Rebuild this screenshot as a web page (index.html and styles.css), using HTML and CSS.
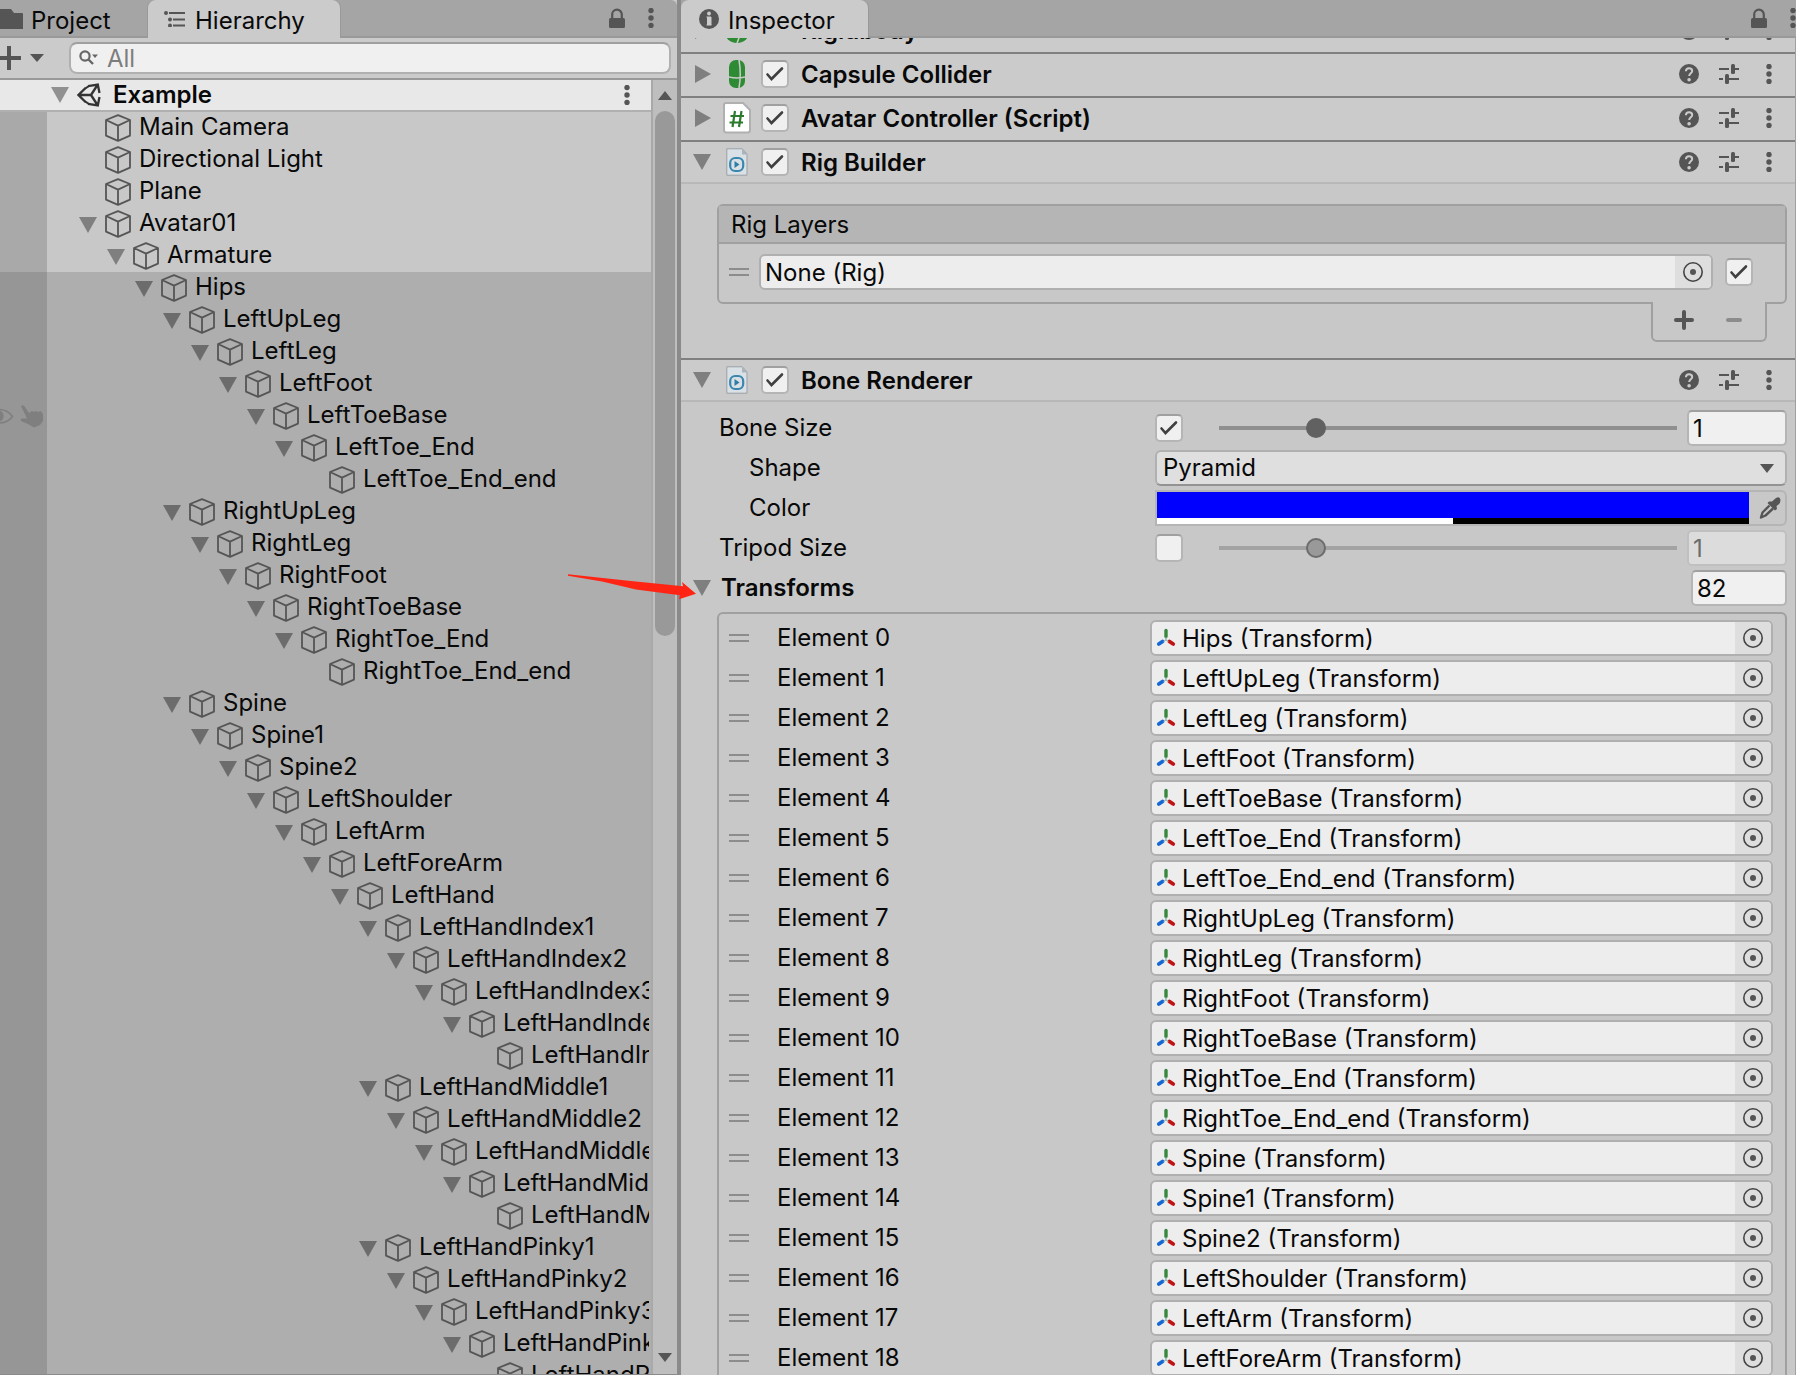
FILE: index.html
```html
<!DOCTYPE html>
<html lang="en">
<head>
<meta charset="utf-8">
<title>Hierarchy and Inspector</title>
<link rel="stylesheet" href="styles.css">
</head>
<body>
<svg class="sprite" aria-hidden="true">
  <symbol id="cube" viewBox="0 0 26 28"><path d="M13 1.200 25 6v15.600L13 26.800 1 21.600V6zM1 6l12 5.600L25 6M13 11.600v15.200" fill="none" stroke="#555" stroke-width="1.800" stroke-linejoin="round"/></symbol>
  <symbol id="down" viewBox="0 0 18 16"><path d="M0 0h18L9 16z"/></symbol>
  <symbol id="right" viewBox="0 0 16 18"><path d="M0 0v18l16-9z"/></symbol>
  <symbol id="dots" viewBox="0 0 6 20"><circle cx="3" cy="2.500" r="2.700"/><circle cx="3" cy="10" r="2.700"/><circle cx="3" cy="17.500" r="2.700"/></symbol>
  <symbol id="lock" viewBox="0 0 16 20"><path d="M3.200 11V6.500a4.800 4.800 0 0 1 9.600 0V11" fill="none" stroke="#555" stroke-width="2.200"/><rect y="10" width="16" height="10" rx="1.500"/></symbol>
  <symbol id="help" viewBox="0 0 20 20"><circle cx="10" cy="10" r="10"/><path d="M6.900 7.200C7 5.100 8.200 4.200 10 4.200c1.900 0 3.200 1 3.200 2.700 0 2.300-3 2.500-3 5.100" fill="none" stroke="#cbcbcb" stroke-width="2"/><circle cx="10.100" cy="15.700" r="1.800" fill="#cbcbcb"/></symbol>
  <symbol id="preset" viewBox="0 0 20 20"><path d="M0 5h10M16 5h4M0 15h4M10 15h10" stroke="#555" stroke-width="2"/><rect x="12" y="0" width="4" height="10" rx="1.500"/><rect x="6" y="10" width="4" height="10" rx="1.500"/></symbol>
  <symbol id="pick" viewBox="0 0 20 20"><circle cx="10" cy="10" r="9.200" fill="none" stroke="#444" stroke-width="1.600"/><circle cx="10" cy="10" r="3"/></symbol>
  <symbol id="axes" viewBox="0 0 20 20"><path d="M10 2.500v6" stroke="#388740" stroke-width="3.400" stroke-linecap="round"/><path d="M9 9h2l-1 2z" fill="#388740"/><path d="M6.500 13.500 2.800 16" stroke="#1569d4" stroke-width="3.800" stroke-linecap="round"/><path d="m13.500 13.500 3.700 2.500" stroke="#c01414" stroke-width="3.800" stroke-linecap="round"/><path d="M10 9v3l-2.500 1.500M10 12l2.500 1.500" fill="none" stroke="#8aa" stroke-width="1"/></symbol>
  <symbol id="asset" viewBox="0 0 22 28"><path d="M.8.800h15.500L21 6v21.200H.8z" fill="#d9e1e7" stroke="#9b9fa3" stroke-width="1"/><path d="M16 1v5.500h5z" fill="#a9b4bd"/><rect x="4.200" y="10" width="13" height="13" rx="5" fill="none" stroke="#3a86ad" stroke-width="2.200"/><path d="M8.500 13v7l5-3.500z" fill="#2f7ca6"/></symbol>
</svg>

<main class="editor">
  <section class="panel hierarchy">
    <div class="tabs" role="tablist">
      <button class="tab tab-project" role="tab"><svg width="24" height="20" viewBox="0 0 24 20"><path d="M0 0h11l3 4h8q1 0 1 1v15H0z"/></svg><span>Project</span></button>
      <button class="tab tab-hierarchy active" role="tab" aria-selected="true"><svg width="22" height="16" viewBox="0 0 22 16"><path d="M5 2h16M9 8.500h12M9 14.500h12" stroke="#555" stroke-width="2"/><circle cx="2" cy="2" r="2"/><circle cx="6" cy="8.500" r="2"/><circle cx="6" cy="14.500" r="2"/></svg><span>Hierarchy</span></button>
      <div class="tab-tools">
        <button class="bare" aria-label="Lock"><svg width="16" height="20"><use href="#lock"/></svg></button>
        <button class="bare" aria-label="Panel menu"><svg width="6" height="20"><use href="#dots"/></svg></button>
      </div>
    </div>
    <div class="toolbar">
      <button class="bare add" aria-label="Create"><svg width="44" height="24" viewBox="0 0 44 24"><path d="M0 12h21M9 0v24" stroke="#555" stroke-width="4"/><path d="M30 8h14l-7 8z"/></svg></button>
      <label class="search"><svg width="20" height="16" viewBox="0 0 20 16"><circle cx="6" cy="6" r="4.600" fill="none" stroke="#666" stroke-width="2.200"/><path d="m9 9 5 5" stroke="#666" stroke-width="2.400"/><path d="M13 4.500h6l-3 3.500z" fill="#666"/></svg><input type="text" placeholder="All" aria-label="Search hierarchy"></label>
    </div>
    <div class="tree-wrap">
      <div class="tree-view">
        <div class="scene"><svg class="fold" width="18" height="16"><use href="#down"/></svg><svg class="logo" width="24" height="24" viewBox="0 0 24 24"><path d="M11 3.200 20.800 1.500 22.500 10M8.500 5 1.500 12l7 7M11 20.800l9.800 1.700 1.700-8.500M1.500 12H14l6.800-10.500M14 12l6.800 10.500" fill="none" stroke="#333" stroke-width="2.300"/><path d="M8 5.600 12 3M8 18.400l4 2.600" fill="none" stroke="#333" stroke-width="2"/></svg><span>Example</span><button class="bare" aria-label="Scene menu"><svg width="6" height="20"><use href="#dots"/></svg></button></div>
        <ul class="tree">
          <li class="leaf"><i></i><svg class="fold"><use href="#down"/></svg><svg class="cube"><use href="#cube"/></svg>Main Camera</li>
          <li class="leaf"><i></i><svg class="fold"><use href="#down"/></svg><svg class="cube"><use href="#cube"/></svg>Directional Light</li>
          <li class="leaf"><i></i><svg class="fold"><use href="#down"/></svg><svg class="cube"><use href="#cube"/></svg>Plane</li>
          <li><i></i><svg class="fold"><use href="#down"/></svg><svg class="cube"><use href="#cube"/></svg>Avatar01</li>
          <li style="--depth:1"><i></i><svg class="fold"><use href="#down"/></svg><svg class="cube"><use href="#cube"/></svg>Armature</li>
          <li class="sel" style="--depth:2"><i></i><svg class="fold"><use href="#down"/></svg><svg class="cube"><use href="#cube"/></svg>Hips</li>
          <li class="sel" style="--depth:3"><i></i><svg class="fold"><use href="#down"/></svg><svg class="cube"><use href="#cube"/></svg>LeftUpLeg</li>
          <li class="sel" style="--depth:4"><i></i><svg class="fold"><use href="#down"/></svg><svg class="cube"><use href="#cube"/></svg>LeftLeg</li>
          <li class="sel" style="--depth:5"><i></i><svg class="fold"><use href="#down"/></svg><svg class="cube"><use href="#cube"/></svg>LeftFoot</li>
          <li class="sel" style="--depth:6"><i><svg width="44" height="24" viewBox="0 0 44 24"><path d="M0 5.500Q8 6 12.500 12.500 8 18.500 0 19" fill="none" stroke="#7f7f7f" stroke-width="1.600"/><path d="M0 6.500a6 6 0 0 1 0 11z" fill="#7f7f7f"/><path d="M21 2q2-2 4 1l4 6 3-2 2 1 2-1 2 1 3-1 1 2 1 1v7l-3 4-6 2.500-5-3-8-3.500q-1-2 1-2.500l5 0z" fill="#7f7f7f"/></svg></i><svg class="fold"><use href="#down"/></svg><svg class="cube"><use href="#cube"/></svg>LeftToeBase</li>
          <li class="sel" style="--depth:7"><i></i><svg class="fold"><use href="#down"/></svg><svg class="cube"><use href="#cube"/></svg>LeftToe_End</li>
          <li class="sel leaf" style="--depth:8"><i></i><svg class="fold"><use href="#down"/></svg><svg class="cube"><use href="#cube"/></svg>LeftToe_End_end</li>
          <li class="sel" style="--depth:3"><i></i><svg class="fold"><use href="#down"/></svg><svg class="cube"><use href="#cube"/></svg>RightUpLeg</li>
          <li class="sel" style="--depth:4"><i></i><svg class="fold"><use href="#down"/></svg><svg class="cube"><use href="#cube"/></svg>RightLeg</li>
          <li class="sel" style="--depth:5"><i></i><svg class="fold"><use href="#down"/></svg><svg class="cube"><use href="#cube"/></svg>RightFoot</li>
          <li class="sel" style="--depth:6"><i></i><svg class="fold"><use href="#down"/></svg><svg class="cube"><use href="#cube"/></svg>RightToeBase</li>
          <li class="sel" style="--depth:7"><i></i><svg class="fold"><use href="#down"/></svg><svg class="cube"><use href="#cube"/></svg>RightToe_End</li>
          <li class="sel leaf" style="--depth:8"><i></i><svg class="fold"><use href="#down"/></svg><svg class="cube"><use href="#cube"/></svg>RightToe_End_end</li>
          <li class="sel" style="--depth:3"><i></i><svg class="fold"><use href="#down"/></svg><svg class="cube"><use href="#cube"/></svg>Spine</li>
          <li class="sel" style="--depth:4"><i></i><svg class="fold"><use href="#down"/></svg><svg class="cube"><use href="#cube"/></svg>Spine1</li>
          <li class="sel" style="--depth:5"><i></i><svg class="fold"><use href="#down"/></svg><svg class="cube"><use href="#cube"/></svg>Spine2</li>
          <li class="sel" style="--depth:6"><i></i><svg class="fold"><use href="#down"/></svg><svg class="cube"><use href="#cube"/></svg>LeftShoulder</li>
          <li class="sel" style="--depth:7"><i></i><svg class="fold"><use href="#down"/></svg><svg class="cube"><use href="#cube"/></svg>LeftArm</li>
          <li class="sel" style="--depth:8"><i></i><svg class="fold"><use href="#down"/></svg><svg class="cube"><use href="#cube"/></svg>LeftForeArm</li>
          <li class="sel" style="--depth:9"><i></i><svg class="fold"><use href="#down"/></svg><svg class="cube"><use href="#cube"/></svg>LeftHand</li>
          <li class="sel" style="--depth:10"><i></i><svg class="fold"><use href="#down"/></svg><svg class="cube"><use href="#cube"/></svg>LeftHandIndex1</li>
          <li class="sel" style="--depth:11"><i></i><svg class="fold"><use href="#down"/></svg><svg class="cube"><use href="#cube"/></svg>LeftHandIndex2</li>
          <li class="sel" style="--depth:12"><i></i><svg class="fold"><use href="#down"/></svg><svg class="cube"><use href="#cube"/></svg>LeftHandIndex3</li>
          <li class="sel" style="--depth:13"><i></i><svg class="fold"><use href="#down"/></svg><svg class="cube"><use href="#cube"/></svg>LeftHandIndex4</li>
          <li class="sel leaf" style="--depth:14"><i></i><svg class="fold"><use href="#down"/></svg><svg class="cube"><use href="#cube"/></svg>LeftHandIndex4_end</li>
          <li class="sel" style="--depth:10"><i></i><svg class="fold"><use href="#down"/></svg><svg class="cube"><use href="#cube"/></svg>LeftHandMiddle1</li>
          <li class="sel" style="--depth:11"><i></i><svg class="fold"><use href="#down"/></svg><svg class="cube"><use href="#cube"/></svg>LeftHandMiddle2</li>
          <li class="sel" style="--depth:12"><i></i><svg class="fold"><use href="#down"/></svg><svg class="cube"><use href="#cube"/></svg>LeftHandMiddle3</li>
          <li class="sel" style="--depth:13"><i></i><svg class="fold"><use href="#down"/></svg><svg class="cube"><use href="#cube"/></svg>LeftHandMiddle4</li>
          <li class="sel leaf" style="--depth:14"><i></i><svg class="fold"><use href="#down"/></svg><svg class="cube"><use href="#cube"/></svg>LeftHandMiddle4_end</li>
          <li class="sel" style="--depth:10"><i></i><svg class="fold"><use href="#down"/></svg><svg class="cube"><use href="#cube"/></svg>LeftHandPinky1</li>
          <li class="sel" style="--depth:11"><i></i><svg class="fold"><use href="#down"/></svg><svg class="cube"><use href="#cube"/></svg>LeftHandPinky2</li>
          <li class="sel" style="--depth:12"><i></i><svg class="fold"><use href="#down"/></svg><svg class="cube"><use href="#cube"/></svg>LeftHandPinky3</li>
          <li class="sel" style="--depth:13"><i></i><svg class="fold"><use href="#down"/></svg><svg class="cube"><use href="#cube"/></svg>LeftHandPinky4</li>
          <li class="sel leaf" style="--depth:14"><i></i><svg class="fold"><use href="#down"/></svg><svg class="cube"><use href="#cube"/></svg>LeftHandPinky4_end</li>
        </ul>
      </div>
      <div class="scrollbar">
        <button class="bare" aria-label="Scroll up"><svg width="14" height="9" viewBox="0 0 14 9"><path d="M0 9h14L7 0z"/></svg></button>
        <div class="track"><div class="thumb"></div></div>
        <button class="bare" aria-label="Scroll down"><svg width="14" height="9" viewBox="0 0 14 9"><path d="M0 0h14L7 9z"/></svg></button>
      </div>
    </div>
  </section>

  <section class="panel inspector">
    <div class="tabs" role="tablist">
      <button class="tab tab-inspector active" role="tab" aria-selected="true"><svg width="20" height="20" viewBox="0 0 20 20"><circle cx="10" cy="10" r="10"/><circle cx="10" cy="4.500" r="1.900" fill="#cbcbcb"/><path d="M7.500 8H12v8M7.500 16h5" stroke="#cbcbcb" stroke-width="1"/><path d="M8 8h4v8H8z" fill="#cbcbcb"/></svg><span>Inspector</span></button>
      <div class="tab-tools">
        <button class="bare" aria-label="Lock"><svg width="16" height="20"><use href="#lock"/></svg></button>
        <button class="bare" aria-label="Panel menu"><svg width="6" height="20"><use href="#dots"/></svg></button>
      </div>
    </div>
    <div class="scroll-area">
      <div class="components">
        <header class="comp">
          <svg class="fold" width="16" height="18"><use href="#right"/></svg>
          <span class="comp-icon"><svg width="28" height="28" viewBox="0 0 28 28"><circle cx="14" cy="14" r="13" fill="#2f8a34"/><path d="M1 14q13 5 26 0M14 1q6 13 0 26" stroke="#cbcbcb" stroke-width="1.500" fill="none"/></svg></span>
          <span class="no-check"></span>
          <h2>Rigidbody</h2>
          <span class="comp-tools"><button class="bare" aria-label="Help"><svg width="20" height="20"><use href="#help"/></svg></button><button class="bare" aria-label="Presets"><svg width="20" height="20"><use href="#preset"/></svg></button><button class="bare" aria-label="Menu"><svg width="6" height="20"><use href="#dots"/></svg></button></span>
        </header>
        <header class="comp">
          <svg class="fold" width="16" height="18"><use href="#right"/></svg>
          <span class="comp-icon"><svg width="16" height="28" viewBox="0 0 16 28"><rect width="16" height="28" rx="7" fill="#2f8a34"/><path d="M0 17q8 2 16 0M10 0q2.500 14 0 28" fill="none" stroke="#cbcbcb" stroke-width="1.500"/></svg></span>
          <input type="checkbox" checked aria-label="Enable Capsule Collider">
          <h2>Capsule Collider</h2>
          <span class="comp-tools"><button class="bare" aria-label="Help"><svg width="20" height="20"><use href="#help"/></svg></button><button class="bare" aria-label="Presets"><svg width="20" height="20"><use href="#preset"/></svg></button><button class="bare" aria-label="Menu"><svg width="6" height="20"><use href="#dots"/></svg></button></span>
        </header>
        <header class="comp">
          <svg class="fold" width="16" height="18"><use href="#right"/></svg>
          <span class="comp-icon"><svg width="28" height="32" viewBox="0 0 28 32"><path d="M3 1h17l7 7v20q0 2.500-2.500 2.500h-21Q1 30.500 1 28V3q0-2 2-2z" fill="#fff" stroke="#b0b0b0" stroke-width="2"/><path d="M12 9 9.500 25M18.500 9 16 25M7.500 14h13.500M6.500 20.500H20" stroke="#2b7a2d" stroke-width="2.200" fill="none"/></svg></span>
          <input type="checkbox" checked aria-label="Enable Avatar Controller">
          <h2>Avatar Controller (Script)</h2>
          <span class="comp-tools"><button class="bare" aria-label="Help"><svg width="20" height="20"><use href="#help"/></svg></button><button class="bare" aria-label="Presets"><svg width="20" height="20"><use href="#preset"/></svg></button><button class="bare" aria-label="Menu"><svg width="6" height="20"><use href="#dots"/></svg></button></span>
        </header>
        <header class="comp open">
          <svg class="fold" width="18" height="16"><use href="#down"/></svg>
          <span class="comp-icon"><svg width="22" height="28"><use href="#asset"/></svg></span>
          <input type="checkbox" checked aria-label="Enable Rig Builder">
          <h2>Rig Builder</h2>
          <span class="comp-tools"><button class="bare" aria-label="Help"><svg width="20" height="20"><use href="#help"/></svg></button><button class="bare" aria-label="Presets"><svg width="20" height="20"><use href="#preset"/></svg></button><button class="bare" aria-label="Menu"><svg width="6" height="20"><use href="#dots"/></svg></button></span>
        </header>
        <div class="rig-body">
          <div class="box">
            <h3>Rig Layers</h3>
            <div class="rig-row"><span class="handle"></span><div class="object"><span>None (Rig)</span><button aria-label="Select rig"><svg width="20" height="20"><use href="#pick"/></svg></button></div><input type="checkbox" checked aria-label="Layer active"></div>
          </div>
          <div class="box-footer">
            <button class="bare" aria-label="Add layer"><svg width="20" height="20" viewBox="0 0 20 20"><path d="M2 10h16M10 2v16" stroke="#555" stroke-width="4" stroke-linecap="round"/></svg></button>
            <button class="bare" aria-label="Remove layer"><svg width="20" height="20" viewBox="0 0 20 20"><path d="M4 10h12" stroke="#8c8c8c" stroke-width="4" stroke-linecap="round"/></svg></button>
          </div>
        </div>
        <header class="comp open">
          <svg class="fold" width="18" height="16"><use href="#down"/></svg>
          <span class="comp-icon"><svg width="22" height="28"><use href="#asset"/></svg></span>
          <input type="checkbox" checked aria-label="Enable Bone Renderer">
          <h2>Bone Renderer</h2>
          <span class="comp-tools"><button class="bare" aria-label="Help"><svg width="20" height="20"><use href="#help"/></svg></button><button class="bare" aria-label="Presets"><svg width="20" height="20"><use href="#preset"/></svg></button><button class="bare" aria-label="Menu"><svg width="6" height="20"><use href="#dots"/></svg></button></span>
        </header>
        <div class="bone-body">
          <div class="prop"><label for="bone-size">Bone Size</label><div class="control"><input type="checkbox" checked aria-label="Draw bones"><input type="range" min="0.01" max="5" step="0.01" value="1" aria-label="Bone size"><input class="number" id="bone-size" type="text" value="1"></div></div>
          <div class="prop sub"><label for="shape">Shape</label><div class="control select"><select id="shape"><option>Pyramid</option></select><svg width="14" height="9" viewBox="0 0 14 9"><path d="M0 0h14L7 9z"/></svg></div></div>
          <div class="prop sub"><label for="color">Color</label><div class="control color"><div class="swatch"><input id="color" type="color" value="#0000ff"><div class="alpha"></div></div><button class="bare" aria-label="Pick color"><svg width="22" height="22" viewBox="0 0 22 22"><path d="m13 4.500 4-3.500q4-2 4.500 2 0 3-2 4.500l-2 1.500.5 3-2 1.500-7.500-7.500L10 4.500z"/><path d="M10.500 8.500 3.500 15.500 2 20.500l4.500-2 7.500-7" fill="none" stroke="#555" stroke-width="2.400" stroke-linejoin="round"/></svg></button></div></div>
          <div class="prop"><label for="tripod-size">Tripod Size</label><div class="control"><input type="checkbox" aria-label="Draw tripods"><input type="range" min="0.01" max="5" step="0.01" value="1" disabled aria-label="Tripod size"><input class="number" id="tripod-size" type="text" value="1" disabled></div></div>
          <div class="prop transforms"><svg class="fold" width="18" height="16"><use href="#down"/></svg><label for="count">Transforms</label><input class="number" id="count" type="text" value="82"></div>
          <div class="box elements">
            <div class="element"><span class="handle"></span><span>Element 0</span><div class="object"><svg width="20" height="20"><use href="#axes"/></svg><span>Hips (Transform)</span><button aria-label="Select"><svg width="20" height="20"><use href="#pick"/></svg></button></div></div>
            <div class="element"><span class="handle"></span><span>Element 1</span><div class="object"><svg width="20" height="20"><use href="#axes"/></svg><span>LeftUpLeg (Transform)</span><button aria-label="Select"><svg width="20" height="20"><use href="#pick"/></svg></button></div></div>
            <div class="element"><span class="handle"></span><span>Element 2</span><div class="object"><svg width="20" height="20"><use href="#axes"/></svg><span>LeftLeg (Transform)</span><button aria-label="Select"><svg width="20" height="20"><use href="#pick"/></svg></button></div></div>
            <div class="element"><span class="handle"></span><span>Element 3</span><div class="object"><svg width="20" height="20"><use href="#axes"/></svg><span>LeftFoot (Transform)</span><button aria-label="Select"><svg width="20" height="20"><use href="#pick"/></svg></button></div></div>
            <div class="element"><span class="handle"></span><span>Element 4</span><div class="object"><svg width="20" height="20"><use href="#axes"/></svg><span>LeftToeBase (Transform)</span><button aria-label="Select"><svg width="20" height="20"><use href="#pick"/></svg></button></div></div>
            <div class="element"><span class="handle"></span><span>Element 5</span><div class="object"><svg width="20" height="20"><use href="#axes"/></svg><span>LeftToe_End (Transform)</span><button aria-label="Select"><svg width="20" height="20"><use href="#pick"/></svg></button></div></div>
            <div class="element"><span class="handle"></span><span>Element 6</span><div class="object"><svg width="20" height="20"><use href="#axes"/></svg><span>LeftToe_End_end (Transform)</span><button aria-label="Select"><svg width="20" height="20"><use href="#pick"/></svg></button></div></div>
            <div class="element"><span class="handle"></span><span>Element 7</span><div class="object"><svg width="20" height="20"><use href="#axes"/></svg><span>RightUpLeg (Transform)</span><button aria-label="Select"><svg width="20" height="20"><use href="#pick"/></svg></button></div></div>
            <div class="element"><span class="handle"></span><span>Element 8</span><div class="object"><svg width="20" height="20"><use href="#axes"/></svg><span>RightLeg (Transform)</span><button aria-label="Select"><svg width="20" height="20"><use href="#pick"/></svg></button></div></div>
            <div class="element"><span class="handle"></span><span>Element 9</span><div class="object"><svg width="20" height="20"><use href="#axes"/></svg><span>RightFoot (Transform)</span><button aria-label="Select"><svg width="20" height="20"><use href="#pick"/></svg></button></div></div>
            <div class="element"><span class="handle"></span><span>Element 10</span><div class="object"><svg width="20" height="20"><use href="#axes"/></svg><span>RightToeBase (Transform)</span><button aria-label="Select"><svg width="20" height="20"><use href="#pick"/></svg></button></div></div>
            <div class="element"><span class="handle"></span><span>Element 11</span><div class="object"><svg width="20" height="20"><use href="#axes"/></svg><span>RightToe_End (Transform)</span><button aria-label="Select"><svg width="20" height="20"><use href="#pick"/></svg></button></div></div>
            <div class="element"><span class="handle"></span><span>Element 12</span><div class="object"><svg width="20" height="20"><use href="#axes"/></svg><span>RightToe_End_end (Transform)</span><button aria-label="Select"><svg width="20" height="20"><use href="#pick"/></svg></button></div></div>
            <div class="element"><span class="handle"></span><span>Element 13</span><div class="object"><svg width="20" height="20"><use href="#axes"/></svg><span>Spine (Transform)</span><button aria-label="Select"><svg width="20" height="20"><use href="#pick"/></svg></button></div></div>
            <div class="element"><span class="handle"></span><span>Element 14</span><div class="object"><svg width="20" height="20"><use href="#axes"/></svg><span>Spine1 (Transform)</span><button aria-label="Select"><svg width="20" height="20"><use href="#pick"/></svg></button></div></div>
            <div class="element"><span class="handle"></span><span>Element 15</span><div class="object"><svg width="20" height="20"><use href="#axes"/></svg><span>Spine2 (Transform)</span><button aria-label="Select"><svg width="20" height="20"><use href="#pick"/></svg></button></div></div>
            <div class="element"><span class="handle"></span><span>Element 16</span><div class="object"><svg width="20" height="20"><use href="#axes"/></svg><span>LeftShoulder (Transform)</span><button aria-label="Select"><svg width="20" height="20"><use href="#pick"/></svg></button></div></div>
            <div class="element"><span class="handle"></span><span>Element 17</span><div class="object"><svg width="20" height="20"><use href="#axes"/></svg><span>LeftArm (Transform)</span><button aria-label="Select"><svg width="20" height="20"><use href="#pick"/></svg></button></div></div>
            <div class="element"><span class="handle"></span><span>Element 18</span><div class="object"><svg width="20" height="20"><use href="#axes"/></svg><span>LeftForeArm (Transform)</span><button aria-label="Select"><svg width="20" height="20"><use href="#pick"/></svg></button></div></div>
          </div>
        </div>
      </div>
    </div>
    <svg class="callout" width="132" height="30" viewBox="0 0 132 30"><path d="M2 2.300 60 8.500l57 5.800-1-4.300 14 11.700-17 5.600 1-4L70 17.500 36 9.500 2 3.700z" fill="#ff2414"/></svg>
  </section>
</main>
</body>
</html>
```
FILE: styles.css
```css
* { box-sizing: border-box; }

body {
  margin: 0;
  height: 100vh;
  overflow: hidden;
  background: #8a8a8a;
  color: #090909;
  font: 24px/32px Inter, "Liberation Sans", sans-serif;
}

.sprite { display: none; }
svg { display: block; flex: none; fill: #555; }
button, input, select { font: inherit; color: inherit; margin: 0; }
.bare { display: flex; padding: 0; border: 0; background: none; }
h2, h3 { margin: 0; font-size: 24px; line-height: 32px; }

.editor {
  display: grid;
  grid-template-columns: 677fr 1115fr;
  grid-template-rows: 100%;
  gap: 4px;
  height: 100%;
}

.panel {
  display: flex;
  flex-direction: column;
  min-width: 0;
  background: #c8c8c8;
}

/* Tab strips */
.tabs {
  display: flex;
  flex: none;
  height: 38px;
  background: #a5a5a5;
  box-shadow: inset 0 -2px #999;
}
.tab {
  display: flex;
  align-items: center;
  gap: 9px;
  padding: 0;
  border: 0;
  background: none;
}
.tab span { padding-top: 4px; }
.tab.active {
  background: #cbcbcb;
  border-radius: 8px 8px 0 0;
}
.tab-project { width: 148px; gap: 7px; }
.tab-hierarchy { width: 192px; padding: 0 0 0 16px; box-shadow: 1px 0 #999, -1px 0 #999; }
.tab-inspector { width: 187px; padding: 0 0 0 18px; box-shadow: 1px 0 #999; }
.tab-tools {
  display: flex;
  gap: 23px;
  margin-left: auto;
  padding: 8px 23px 0 0;
}
.inspector .tab-tools { padding-right: 0; }

/* Hierarchy */
.hierarchy { border-bottom: 1px solid #8a8a8a; }
.hierarchy .tabs { border-top-right-radius: 6px; }
.toolbar {
  display: flex;
  flex: none;
  align-items: center;
  gap: 25px;
  height: 42px;
  padding-right: 6px;
  background: #cbcbcb;
  border-bottom: 2px solid #999;
}
.search {
  display: flex;
  flex: 1;
  align-items: center;
  gap: 8px;
  height: 32px;
  padding-left: 8px;
  background: #f0f0f0;
  border: 2px solid #b0b0b0;
  border-top-color: #a0a0a0;
  border-radius: 8px;
}
.search input {
  flex: 1;
  min-width: 0;
  padding: 2px 0 0;
  border: 0;
  background: none;
  outline: 0;
}
.search input::placeholder { color: #7d7d7d; }

.tree-wrap { display: flex; flex: 1; min-height: 0; }
.tree-view { flex: 1; min-width: 0; overflow: hidden; }
.scene {
  display: flex;
  align-items: center;
  height: 32px;
  padding: 0 21px 0 51px;
  background: #e8e8e8;
  border-bottom: 2px solid #b0b0b0;
  font-weight: 600;
}
.scene .fold { fill: #909090; }
.scene .logo { margin: 0 12px 0 8px; }
.scene button { margin-left: auto; }
.tree { margin: 0; padding: 0; list-style: none; }
.tree li {
  --depth: 0;
  display: flex;
  height: 32px;
  line-height: 30px;
  overflow: hidden;
  white-space: nowrap;
  border-right: 2px solid #c8c8c8;
}
.tree i {
  display: flex;
  flex: none;
  align-items: center;
  width: 47px;
  height: 32px;
  background: #a9a9a9;
}
.tree .sel { background: #aeaeae; border-right-color: #aeaeae; }
.tree .sel i { background: #969696; }
.tree .fold {
  width: 18px;
  height: 16px;
  margin: 9px 8px 0 calc(32px + var(--depth) * 28px);
  fill: #7f7f7f;
}
.tree .sel .fold { fill: #6c6c6c; }
.tree .leaf .fold { visibility: hidden; }
.tree .cube { width: 26px; height: 28px; margin: 2px 8px 0 0; }

.scrollbar {
  display: flex;
  flex-direction: column;
  align-items: center;
  width: 26px;
  padding: 11px 0 12px;
  background: #bebebe;
  border-left: 2px solid #a9a9a9;
}
.track { display: flex; flex: 1; flex-direction: column; margin: 11px 0 0; }
.thumb { flex: none; width: 20px; height: 42.3%; border-radius: 10px; background: #999; }

/* Inspector */
.inspector { position: relative; border-right: 1px solid #a0a0a0; }
.inspector .tabs { margin-right: -1px; }
.scroll-area { flex: 1; min-height: 0; overflow: hidden; }
/* The list is scrolled part of the way through the Rigidbody header. */
.components { margin-top: -28px; }
.comp {
  display: flex;
  align-items: center;
  height: 44px;
  padding: 0 23px 2px 14px;
  background: #cbcbcb;
  border-bottom: 2px solid #808080;
}
.comp.open { height: 42px; padding-left: 12px; padding-bottom: 0; border-bottom-color: #b8b8b8; }
.fold { fill: #7f7f7f; }
.comp-icon { display: flex; justify-content: center; width: 28px; margin: 0 10px 0 12px; }
.no-check { width: 28px; }
.comp h2 { margin-left: 12px; padding-top: 2px; font-weight: 600; white-space: nowrap; }
.comp-tools { display: flex; gap: 20px; margin-left: auto; }
.comp-tools button:last-child { margin-left: 7px; }

input[type="checkbox"] {
  appearance: none;
  flex: none;
  width: 28px;
  height: 28px;
  background: #f0f0f0;
  border: 2px solid #b5b5b5;
  border-top-color: #a0a0a0;
  border-radius: 5px;
}
input[type="checkbox"]:checked {
  background: #f0f0f0 url("data:image/svg+xml,%3Csvg xmlns='http://www.w3.org/2000/svg' viewBox='0 0 24 24'%3E%3Cpath d='M4.500 12.500 8.500 17 19 6.500' fill='none' stroke='%23404040' stroke-width='2.600' stroke-linecap='round'/%3E%3C/svg%3E") center / 24px no-repeat;
}

.rig-body { padding: 20px 8px 16px 36px; border-bottom: 2px solid #808080; }
.box { border: 2px solid #a0a0a0; border-radius: 6px; }
.box h3 {
  height: 38px;
  padding: 3px 12px 0;
  font-weight: 400;
  background: #b5b5b5;
  border-bottom: 2px solid #a0a0a0;
}
.rig-row { display: flex; align-items: center; height: 58px; padding: 0 32px 2px 10px; }
.rig-row .object { flex: 1; margin: 0 12px 0 10px; }
.handle {
  flex: none;
  width: 20px;
  height: 8px;
  border: solid #8c8c8c;
  border-width: 2px 0;
}
.box-footer {
  position: relative;
  display: flex;
  align-items: center;
  gap: 30px;
  width: 116px;
  height: 40px;
  margin: -2px 20px 0 auto;
  padding: 0 0 2px 21px;
  background: #c8c8c8;
  border: 2px solid #a0a0a0;
  border-top: 0;
  border-radius: 0 0 6px 6px;
}

.object {
  display: flex;
  align-items: center;
  height: 36px;
  padding-left: 4px;
  background: #ededed;
  border: 2px solid #b0b0b0;
  border-radius: 6px;
  overflow: hidden;
  white-space: nowrap;
}
.object span { padding-top: 2px; }
.object button {
  display: flex;
  align-items: center;
  justify-content: center;
  width: 36px;
  height: 32px;
  margin-left: auto;
  padding: 0;
  border: 0;
  background: #dedede;
}

.bone-body {
  display: flex;
  flex-direction: column;
  gap: 4px;
  padding: 8px 8px 0 38px;
}
.prop {
  display: grid;
  grid-template-columns: 436fr 632fr;
  align-items: center;
  height: 36px;
}
.sub label { padding-left: 30px; }
.control { display: flex; align-items: center; height: 36px; }
.number {
  width: 100px;
  height: 36px;
  padding: 0 4px;
  background: #f0f0f0;
  border: 2px solid #b5b5b5;
  border-top-color: #a0a0a0;
  border-radius: 5px;
}
.number:disabled { color: #6c6c6c; background: #dcdcdc; border-color: #c0c0c0; }

input[type="range"] {
  appearance: none;
  flex: 1;
  min-width: 0;
  height: 20px;
  margin: 0 10px 0 36px;
  background: linear-gradient(#8f8f8f, #8f8f8f) center / 100% 4px no-repeat;
}
input[type="range"]::-webkit-slider-thumb {
  appearance: none;
  width: 20px;
  height: 20px;
  background: #616161;
  border-radius: 50%;
}
input[type="range"]:disabled { background-image: linear-gradient(#a3a3a3, #a3a3a3); }
input[type="range"]:disabled::-webkit-slider-thumb { background: #999; border: 2px solid #6c6c6c; }

.select {
  background: #dfdfdf;
  border: 2px solid #b0b0b0;
  border-bottom-color: #939393;
  border-radius: 6px;
  padding-right: 11px;
}
.select select {
  appearance: none;
  flex: 1;
  height: 32px;
  padding: 0 6px;
  border: 0;
  background: none;
}
.color {
  border: 2px solid #b5b5b5;
  border-radius: 0 6px 6px 0;
}
.swatch { flex: 1; height: 32px; }
.swatch input {
  display: block;
  appearance: none;
  width: 100%;
  height: 26px;
  padding: 0;
  border: 0;
  background: none;
}
.swatch input::-webkit-color-swatch-wrapper { padding: 0; }
.swatch input::-webkit-color-swatch { border: 0; border-radius: 0; }
.alpha { height: 6px; background: linear-gradient(90deg, #fff 50%, #000 50%); }
.color button { padding: 0 4px 0 10px; }

.transforms { display: flex; margin-left: -26px; }
.transforms label { margin-left: 10px; font-weight: 600; }
.transforms .number { width: 96px; margin-left: auto; }

.elements {
  display: flex;
  flex-direction: column;
  gap: 4px;
  margin: 2px 0 0 -2px;
  padding: 6px 12px 6px 10px;
}
.element {
  display: grid;
  grid-template-columns: 48px 373fr 623fr;
  align-items: center;
}
.element .object span { margin-left: 6px; }

/* Red arrow pointing at the Transforms foldout */
.callout { position: absolute; top: 572px; left: -115px; }
```
